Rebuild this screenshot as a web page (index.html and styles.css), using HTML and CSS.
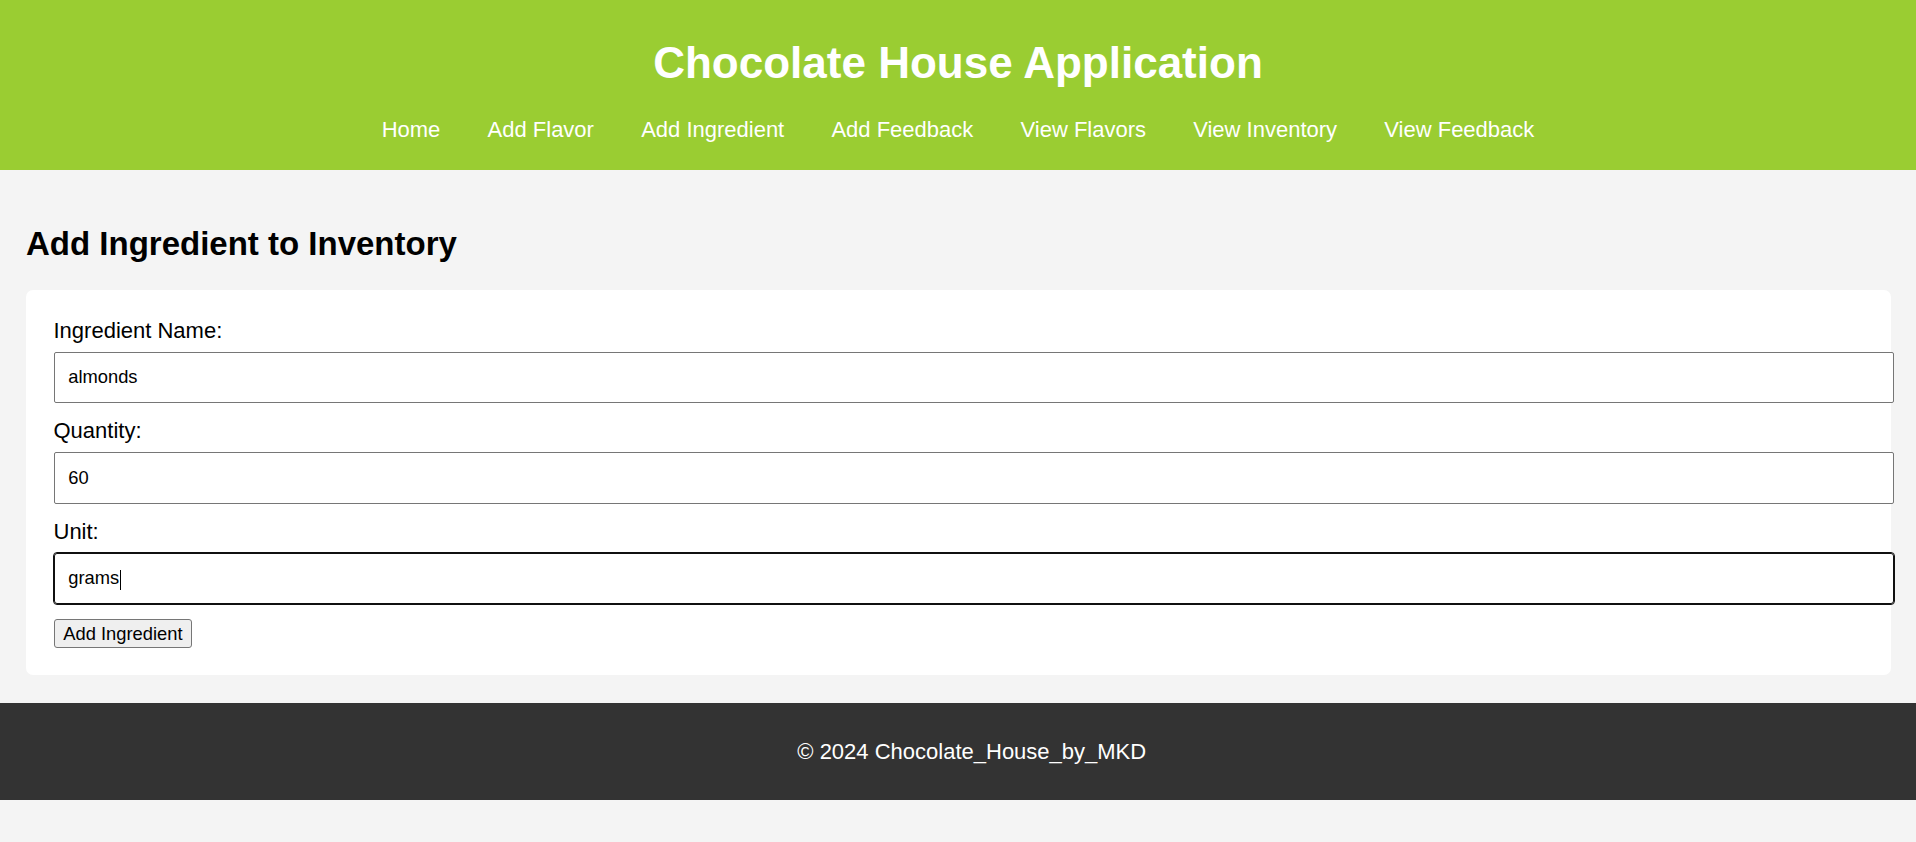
FILE: index.html
```html
<!DOCTYPE html>
<html lang="en">
<head>
<meta charset="utf-8">
<title>Chocolate House Application</title>
<link rel="stylesheet" href="styles.css">
</head>
<body>
<header class="site-header">
  <h1 class="site-title">Chocolate House Application</h1>
  <nav class="site-nav">
    <a href="#">Home</a>
    <a href="#">Add Flavor</a>
    <a href="#">Add Ingredient</a>
    <a href="#">Add Feedback</a>
    <a href="#">View Flavors</a>
    <a href="#">View Inventory</a>
    <a href="#">View Feedback</a>
  </nav>
</header>
<main class="content">
  <h2 class="page-title">Add Ingredient to Inventory</h2>
  <form class="card">
    <label class="field-label" for="name">Ingredient Name:</label>
    <input class="field-input" id="name" type="text" value="almonds">
    <label class="field-label" for="qty">Quantity:</label>
    <input class="field-input" id="qty" type="text" value="60">
    <label class="field-label" for="unit">Unit:</label>
    <div class="field-wrap">
      <input class="field-input is-focused" id="unit" type="text" value="grams">
      <span class="caret"></span>
    </div>
    <div class="actions"><button class="submit-btn" type="button">Add Ingredient</button></div>
  </form>
</main>
<footer class="site-footer">
  <p class="footer-text">© 2024 Chocolate_House_by_MKD</p>
</footer>
</body>
</html>
```
FILE: styles.css
```css
html, body {
  margin: 0;
  padding: 0;
}
body {
  background: #f4f4f4;
  color: #000;
  font-family: "Liberation Sans", Arial, sans-serif;
}
.site-header {
  background: #9acd32;
  color: #fff;
  text-align: center;
  padding: 37px 0 28.5px;
}
.site-title {
  margin: 0 0 28.5px;
  font-size: 44px;
  line-height: 51px;
  font-weight: bold;
}
.site-nav {
  display: flex;
  justify-content: center;
  gap: 47.2px;
  font-size: 22px;
  line-height: 25px;
}
.site-nav a {
  color: #fff;
  text-decoration: none;
}
.content {
  padding: 27px 25px 27.5px 26px;
}
.page-title {
  margin: 27.5px 0 27.5px;
  font-size: 33px;
  line-height: 38px;
  font-weight: bold;
}
.card {
  background: #fff;
  border-radius: 7px;
  padding: 27.5px;
  display: block;
}
.field-label {
  display: block;
  height: 25px;
  font-size: 22px;
  line-height: 25px;
  margin: 0 0 9px;
}
.field-wrap {
  position: relative;
}
.field-input {
  display: block;
  box-sizing: border-box;
  width: calc(100% + 30.25px);
  height: 51.6px;
  margin: 0 0 15px;
  padding: 0 13.75px;
  border: 1.375px solid #767676;
  border-radius: 2px;
  background: #fff;
  font-family: "Liberation Sans", Arial, sans-serif;
  font-size: 18.33px;
  color: #000;
  outline: none;
}
.field-input.is-focused {
  border-color: #101010;
  outline: 1.6px solid #101010;
  outline-offset: 0;
  border-radius: 3px;
}
.caret {
  position: absolute;
  left: 66.2px;
  top: 17px;
  width: 1.3px;
  height: 20px;
  background: #000;
}
.actions {
  display: flex;
}
.submit-btn {
  box-sizing: border-box;
  height: 28.4px;
  padding: 0 8.8px;
  border: 1.4px solid #767676;
  border-radius: 3px;
  background: #efefef;
  color: #000;
  font-family: "Liberation Sans", Arial, sans-serif;
  font-size: 18.33px;
  line-height: 25.6px;
}
.site-footer {
  background: #333;
  color: #fff;
  text-align: center;
  padding: 36.4px 0 36.4px 27.5px;
}
.footer-text {
  margin: 0;
  font-size: 22px;
  line-height: 25px;
}
```
